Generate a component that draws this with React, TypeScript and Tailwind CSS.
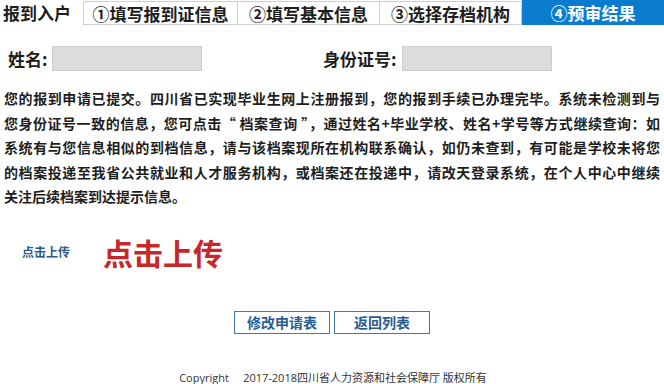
import React from "react";

const cjk = { fontFamily: '"Noto Sans CJK SC", "Noto Sans", sans-serif' };

const lines = [
  "您的报到申请已提交。四川省已实现毕业生网上注册报到，您的报到手续已办理完毕。系统未检测到与",
  "您身份证号一致的信息，您可点击“ 档案查询 ”，通过姓名+毕业学校、姓名+学号等方式继续查询：如",
  "系统有与您信息相似的到档信息，请与该档案现所在机构联系确认，如仍未查到，有可能是学校未将您",
  "的档案投递至我省公共就业和人才服务机构，或档案还在投递中，请改天登录系统，在个人中心中继续",
];

export default function App() {
  return (
    <div className="w-[664px] h-[384px] bg-white text-[#1e1e1e] overflow-hidden" style={cjk}>
      {/* tab bar */}
      <div className="flex h-[25px] items-stretch">
        <div className="w-[83px] pl-[3px] flex items-center text-[17px] font-bold leading-none">报到入户</div>
        <div className="w-[155px] mt-[1px] border border-[#cfcfcf] flex items-center justify-center text-[17px] font-bold leading-none">①填写报到证信息</div>
        <div className="w-[142px] mt-[1px] border border-l-0 border-[#cfcfcf] flex items-center justify-center text-[17px] font-bold leading-none">②填写基本信息</div>
        <div className="w-[142px] mt-[1px] border border-l-0 border-[#cfcfcf] flex items-center justify-center text-[17px] font-bold leading-none">③选择存档机构</div>
        <div className="flex-1 bg-[#0a7cd0] text-white flex items-center justify-center text-[17px] font-bold leading-none">④预审结果</div>
      </div>

      {/* name / id row */}
      <div className="flex items-center mt-[21px] h-[25px]">
        <div className="w-[52px] pl-[8px] text-[17px] font-bold leading-none">姓名:</div>
        <div className="w-[150px] h-[25px] bg-[#dcdcdc] border border-[#cccccc]"></div>
        <div className="w-[121px]"></div>
        <div className="w-[79px] text-[17px] font-bold leading-none">身份证号:</div>
        <div className="w-[150px] h-[25px] bg-[#dcdcdc] border border-[#cccccc]"></div>
      </div>

      {/* message */}
      <div className="mt-[15px] pl-[4px] w-[660px] text-[14px] leading-[24.5px] font-bold">
        {lines.map((l, i) => (
          <div key={i} className="text-justify [text-align-last:justify] whitespace-nowrap overflow-visible">
            {l}
          </div>
        ))}
        <div>关注后续档案到达提示信息。</div>
      </div>

      {/* upload */}
      <div className="flex items-center mt-[26px] h-[34px]">
        <div className="pl-[22px] w-[103px] text-[12px] font-bold text-[#2b5a86] leading-none">点击上传</div>
        <div className="text-[30px] font-bold text-[#c4282a] leading-none">点击上传</div>
      </div>

      {/* buttons */}
      <div className="flex justify-center gap-[4px] mt-[42px]">
        <button className="w-[96px] h-[23px] border border-[#3d7ab5] text-[14px] font-bold text-[#2a5d8f] leading-none" style={cjk}>修改申请表</button>
        <button className="w-[96px] h-[23px] border border-[#3d7ab5] text-[14px] font-bold text-[#2a5d8f] leading-none" style={cjk}>返回列表</button>
      </div>

      {/* footer */}
      <div className="mt-[38px] flex justify-center text-[11px] text-[#333] leading-none" style={{ fontFamily: '"Open Sans", "Noto Sans CJK SC", sans-serif' }}>
        <span className="pl-[2px]">Copyright&nbsp;&nbsp;&nbsp;&nbsp;&nbsp;2017-2018四川省人力资源和社会保障厅 版权所有</span>
      </div>
    </div>
  );
}
